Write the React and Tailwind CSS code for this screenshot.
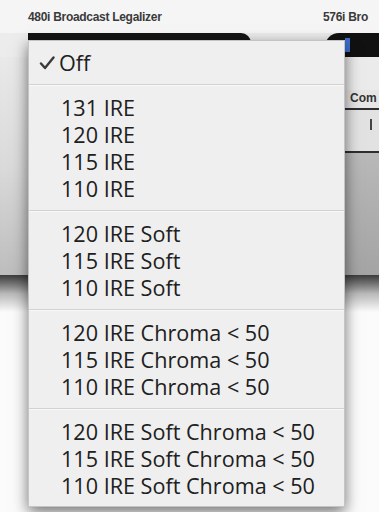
import React from 'react';

const groups = [
  ['131 IRE', '120 IRE', '115 IRE', '110 IRE'],
  ['120 IRE Soft', '115 IRE Soft', '110 IRE Soft'],
  ['120 IRE Chroma < 50', '115 IRE Chroma < 50', '110 IRE Chroma < 50'],
  ['120 IRE Soft Chroma < 50', '115 IRE Soft Chroma < 50', '110 IRE Soft Chroma < 50'],
];

const Separator = () => (
  <div className="py-[8px]">
    <div className="h-px bg-[#d2d2d2]" />
    <div className="h-px bg-[#f8f8f8]" />
  </div>
);

const Item = ({ children, checked }) => (
  <div className="relative h-[27px] pl-[32px] flex items-center whitespace-nowrap leading-[27px]">
    {checked && (
      <svg className="absolute left-[10px] top-[7px]" width="16" height="14" viewBox="0 0 16 14">
        <path d="M2 7.5 L6 12 L14.5 1.5" fill="none" stroke="#3a3a3a" strokeWidth="2.4" strokeLinecap="round" strokeLinejoin="round" />
      </svg>
    )}
    <span className={checked ? '-ml-[2px]' : ''}>{children}</span>
  </div>
);

export default function App() {
  return (
    <div className="relative w-[379px] h-[512px] overflow-hidden bg-[#fbfbfb]" style={{ fontFamily: '"Liberation Sans", Arial, sans-serif' }}>
      {/* window behind the menu */}
      <div className="flex flex-col h-[312px]">
        <div className="h-[33px] bg-[#f5f5f5] flex items-center text-[12px] font-bold text-[#3a3a3a] tracking-[-0.3px] whitespace-nowrap">
          <div className="w-[323px] shrink-0 pl-[28px] pt-[1px]">480i Broadcast Legalizer</div>
          <div className="pt-[1px]">576i Bro</div>
        </div>
        <div className="h-[24px] flex bg-[#ececec]">
          <div className="ml-[28px] w-[223px] h-[10px] bg-[#141414] rounded-tr-[12px]" />
          <div className="ml-[74px] flex-1 bg-[#111] rounded-tl-[14px] flex items-start pt-[5px] pl-[20px]">
            <div className="w-[5px] h-[14px] bg-[#3d6fd0]" />
          </div>
        </div>
        <div className="flex h-[218px]">
          <div className="w-[28px] bg-gradient-to-b from-[#e9e9e9] via-[#dadada] to-[#bdbdbd]" />
          <div className="flex-1" />
          <div className="w-[34px] flex flex-col bg-gradient-to-b from-[#c9c9c9] to-[#a4a4a4]">
            <div className="h-[33px] bg-[#ebebeb]" />
            <div className="h-[20px] bg-[#e6e6e6] border-b-[2px] border-[#2e2e2e] text-[12px] font-bold text-[#333] pl-[5px] leading-[16px]">Com</div>
            <div className="h-[43px] bg-[#e2e2e2] border-b-[2px] border-[#2e2e2e] flex justify-end pr-[7px] pt-[9px]">
              <div className="w-[2px] h-[11px] bg-[#444]" />
            </div>
          </div>
        </div>
        <div className="flex-1 bg-gradient-to-b from-[#3c3c3c] via-[#b8b8b8] to-[#fbfbfb]" />
      </div>

      {/* popup menu */}
      <div
        className="absolute left-[28px] top-[40px] w-[317px] bg-[#efefef] border border-[#c4c4c4] pt-[8px] pb-[7px] text-[21.6px] font-medium text-[#202020] shadow-[0_5px_14px_rgba(0,0,0,0.55)]"
        style={{ fontFamily: '"Open Sans", "DejaVu Sans", sans-serif' }}
      >
        <Item checked>Off</Item>
        {groups.map((g, i) => (
          <div key={i}>
            <Separator />
            {g.map((label) => (
              <Item key={label}>{label}</Item>
            ))}
          </div>
        ))}
      </div>
    </div>
  );
}
